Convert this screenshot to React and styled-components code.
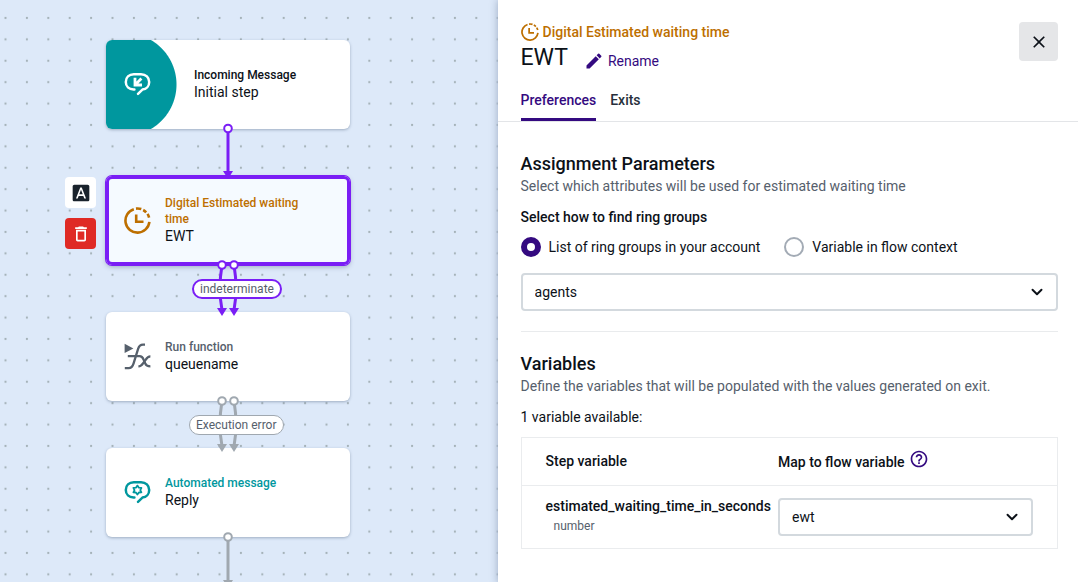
import React, { useState } from 'react';
import styled, { createGlobalStyle, css } from 'styled-components';
import { MdEdit, MdHelpOutline, MdDeleteOutline, MdFontDownload, MdClose } from 'react-icons/md';
import { ChevronDown } from 'lucide-react';

const GlobalStyle = createGlobalStyle`
  * {
    box-sizing: border-box;
  }
  body {
    margin: 0;
    background: #dde9f9;
    color: #0c1118;
    font-family: Roboto, 'Liberation Sans', sans-serif;
    font-size: 14px;
    line-height: 20px;
  }
  button, select {
    font: inherit;
    color: inherit;
    cursor: pointer;
  }
`;

const Layout = styled.div`
  display: grid;
  grid-template-columns: minmax(0, 6fr) minmax(0, 7fr);
  min-height: 100vh;
`;

/* Canvas */

const Canvas = styled.section`
  position: relative;
  overflow: hidden;
`;

const Drawing = styled.svg`
  position: absolute;
  top: 0;
  left: 0;
  width: 100%;
  height: 100%;
  pointer-events: none;
`;

const Node = styled.article`
  position: absolute;
  left: 106px;
  top: ${(p) => p.$top}px;
  width: 244px;
  height: 89px;
  display: flex;
  align-items: center;
  overflow: hidden;
  border-radius: 6px;
  background: #fff;
  box-shadow: 0 1px 3px rgba(40, 60, 90, 0.35);

  ${(p) =>
    p.$selected &&
    css`
      background: #f5faff;
      overflow: visible;
      box-shadow: 0 0 0 1px #7a1ef5, inset 0 0 0 3px #7a1ef5, 0 2px 5px rgba(40, 60, 90, 0.35);
    `}
`;

const NodeIcon = styled.div`
  display: flex;
  flex: none;
  width: 59px;
  padding-left: 18px;
  color: ${(p) => p.$color};
`;

const StartBadge = styled.div`
  display: flex;
  align-items: center;
  flex: none;
  width: 71px;
  height: 100%;
  margin-right: 17px;
  padding-left: 18px;
  color: #fff;
  background: radial-gradient(circle at 19px 50%, #00979e 51px, transparent 52px);
`;

const NodeText = styled.div`
  flex: 1;
  padding: 0 36px 2px 0;
`;

const NodeType = styled.div`
  font-size: 12px;
  font-weight: 500;
  line-height: 16px;
  color: ${(p) => p.$color};
`;

const NodeName = styled.div`
  font-size: 14px;
  line-height: 18px;
`;

const EdgeLabel = styled.div`
  position: absolute;
  left: ${(p) => p.$left}px;
  top: ${(p) => p.$top}px;
  padding: 0 6px;
  border: ${(p) => (p.$active ? '2px solid #7a1ef5' : '1px solid #a0a8b0')};
  border-radius: 10px;
  background: #fff;
  color: #56606c;
  font-size: 12px;
  line-height: ${(p) => (p.$active ? 16 : 18)}px;
`;

const NodeTools = styled.div`
  position: absolute;
  left: 65px;
  top: 177px;
  display: grid;
  gap: 10px;
`;

const ToolButton = styled.button`
  display: flex;
  align-items: center;
  justify-content: center;
  width: 31px;
  height: 31px;
  padding: 0;
  border: none;
  border-radius: 4px;
  background: ${(p) => (p.$danger ? '#df2a25' : '#fff')};
  color: ${(p) => (p.$danger ? '#fff' : '#19222c')};
`;

/* Side panel */

const Panel = styled.aside`
  position: relative;
  background: #fff;
  box-shadow: 0 0 8px rgba(30, 50, 90, 0.35);
`;

const PanelHeader = styled.header`
  display: flex;
  justify-content: space-between;
  align-items: flex-start;
  padding: 22px 20px 0 23px;
  border-bottom: 1px solid #e3e5e8;
`;

const StepType = styled.div`
  display: flex;
  align-items: center;
  gap: 4px;
  color: #bd6f00;
  font-weight: 500;
`;

const TitleRow = styled.div`
  display: flex;
  align-items: center;
  gap: 16px;
`;

const Title = styled.h1`
  margin: 0;
  font-size: 23px;
  font-weight: 400;
  line-height: 32px;
`;

const RenameButton = styled.button`
  display: flex;
  align-items: center;
  gap: 4px;
  padding: 5px 0 0;
  border: none;
  background: none;
  color: #340a80;
`;

const Tabs = styled.nav`
  display: flex;
  gap: 14px;
  margin-top: 16px;
`;

const Tab = styled.a`
  padding-bottom: 8px;
  border-bottom: 3px solid ${(p) => (p.$active ? '#340a80' : 'transparent')};
  color: ${(p) => (p.$active ? '#340a80' : '#27303b')};
  font-weight: 500;
  text-decoration: none;
`;

const CloseButton = styled.button`
  display: flex;
  align-items: center;
  justify-content: center;
  width: 39px;
  height: 39px;
  padding: 0;
  border: none;
  border-radius: 4px;
  background: #e5e6e8;
`;

const PanelBody = styled.div`
  padding: 30px 20px 34px 23px;
`;

const SectionTitle = styled.h2`
  margin: 0;
  font-size: 18px;
  font-weight: 500;
  line-height: 24px;
`;

const Hint = styled.p`
  margin: 0 0 11px;
  color: #56606c;
`;

const RadioGroup = styled.fieldset`
  display: flex;
  flex-wrap: wrap;
  gap: 10px 24px;
  margin: 0 0 16px;
  padding: 0;
  border: none;
`;

const Legend = styled.legend`
  margin-bottom: 10px;
  padding: 0;
  font-weight: 500;
`;

const RadioLabel = styled.label`
  display: flex;
  align-items: center;
  gap: 8px;
`;

const Radio = styled.input`
  appearance: none;
  width: 20px;
  height: 20px;
  margin: 0;
  border: 2px solid #a3abb5;
  border-radius: 50%;
  background: #fff;

  &:checked {
    border: 6px solid #340a80;
  }
`;

const SelectWrap = styled.div`
  display: grid;
  align-items: center;

  > * {
    grid-area: 1 / 1;
  }

  > svg {
    justify-self: end;
    margin-right: 12px;
    pointer-events: none;
  }
`;

const Select = styled.select`
  appearance: none;
  width: 100%;
  height: 38px;
  padding: 0 36px 0 12px;
  border: 2px solid #d3d9de;
  border-radius: 4px;
  background: #fff;
`;

const Divider = styled.hr`
  margin: 20px 0;
  border: 0;
  height: 1px;
  background: #e9ebed;
`;

const Table = styled.table`
  width: 100%;
  margin-top: 10px;
  border: 1px solid #eaecee;
  border-collapse: collapse;
  text-align: left;

  th {
    height: 48px;
    padding: 0;
    font-weight: 500;
  }

  th:first-child {
    width: 257px;
    padding: 0 6px 2px 24px;
  }

  td {
    padding: 12px 24px 12px 0;
  }

  tbody tr {
    border-top: 1px solid #eaecee;
  }
`;

const HeadWithHelp = styled.span`
  display: flex;
  gap: 4px;
  align-items: center;

  svg {
    margin-bottom: 5px;
    color: #340a80;
  }
`;

const VariableType = styled.div`
  padding-left: 8px;
  color: #56606c;
  font-size: 12px;
  font-weight: 400;
`;

const ClockIcon = ({ size }) => (
  <svg width={size} height={size} viewBox="0 0 27 27" fill="none" stroke="currentColor" strokeWidth="2.6">
    <path d="M9.8 2.2A12 12 0 1 0 25.4 14.9" />
    <path d="M12 1.6A12 12 0 0 1 17.3 2.1M19.2 3A12 12 0 0 1 22.2 5.3M23.5 6.9A12 12 0 0 1 25.1 10.6" />
    <path d="M12.2 7.5V14.8H19.5" />
  </svg>
);

const Bubble = ({ children }) => (
  <svg width="27" height="27" viewBox="0 0 27 27" fill="none" stroke="currentColor" strokeWidth="2.5">
    <path
      strokeLinecap="round"
      d="M10.4 18.6H9.6C5 18.4 1.8 15.4 1.8 11C1.8 6.4 5 3.2 9.8 3.2H17C21.8 3.2 25.2 6.4 25.2 11C25.2 15 22.4 18.2 18.4 18.6L14 22.8"
    />
    {children}
  </svg>
);

const IncomingIcon = () => (
  <Bubble>
    <path d="M11 6.8V14H18M11.5 13.5L17.4 7.6" strokeWidth="2.8" />
  </Bubble>
);

const AutomatedIcon = () => (
  <Bubble>
    <path
      strokeWidth="1.8"
      strokeLinejoin="round"
      d="M13.4 6.6L14.9 8.7L17.4 8.9L16.3 11.1L17.4 13.3L14.9 13.5L13.4 15.6L11.9 13.5L9.4 13.3L10.5 11.1L9.4 8.9L11.9 8.7Z"
    />
  </Bubble>
);

const FunctionIcon = () => (
  <svg width="27" height="27" viewBox="0 0 27 27" fill="none" stroke="currentColor" strokeWidth="2.3">
    <path d="M0.6 0.8L9.4 5.4L0.6 10Z" fill="currentColor" stroke="none" />
    <path d="M21 1.6H19C16 1.6 15 3 14.1 5.8L9.6 20.4C8.6 23.8 7.6 25.2 4.6 25.2H0.8" />
    <path d="M3.8 13.2H15.6C18 13.2 18.8 14.6 19.6 16.6L21.2 20.4C22 22.6 23 23.4 26.4 23.4" />
    <path d="M26.4 13.4C24 13.4 23 14.6 21.6 16.8L19.2 20.2C17.8 22.4 16.8 23.4 14.4 23.4" />
  </svg>
);

const Port = ({ x, y, color }) => <circle cx={x} cy={y} r="3.8" fill="#fff" stroke={color} strokeWidth="2" />;

const Arrow = ({ x, y, color }) => <path d={`M${x - 5} ${y - 7}H${x + 5}L${x} ${y + 1}Z`} fill={color} />;

const PURPLE = '#7a1ef5';
const GREY = '#a0a8b0';

// Two parallel exits between neighbouring steps
const DoubleEdge = ({ y, color }) => (
  <g>
    <path
      d={`M222 ${y}Q218 ${y + 24} 222 ${y + 45}M234 ${y}Q238 ${y + 24} 234 ${y + 45}`}
      fill="none"
      stroke={color}
      strokeWidth="3"
    />
    <Arrow x={222} y={y + 50} color={color} />
    <Arrow x={234} y={y + 50} color={color} />
    <Port x={222} y={y} color={color} />
    <Port x={234} y={y} color={color} />
  </g>
);

const SelectField = ({ options, ...rest }) => (
  <SelectWrap>
    <Select {...rest}>
      {options.map((o) => (
        <option key={o}>{o}</option>
      ))}
    </Select>
    <ChevronDown size={18} strokeWidth={2.6} />
  </SelectWrap>
);

const FlowCanvas = () => (
  <Canvas>
    <Drawing>
      <defs>
        <pattern id="dots" x="-5.2" y="7.3" width="21.4" height="21.4" patternUnits="userSpaceOnUse">
          <circle cx="10.7" cy="10.7" r="1.1" fill="#a3b0b6" />
        </pattern>
      </defs>
      <rect width="100%" height="100%" fill="url(#dots)" />
    </Drawing>

    <Node $top={40}>
      <StartBadge>
        <IncomingIcon />
      </StartBadge>
      <NodeText>
        <NodeType $color="#0c1118">Incoming Message</NodeType>
        <NodeName>Initial step</NodeName>
      </NodeText>
    </Node>

    <Node $top={176} $selected>
      <NodeIcon $color="#bd6f00">
        <ClockIcon size={27} />
      </NodeIcon>
      <NodeText>
        <NodeType $color="#bd6f00">Digital Estimated waiting time</NodeType>
        <NodeName>EWT</NodeName>
      </NodeText>
    </Node>

    <Node $top={312}>
      <NodeIcon $color="#56606c">
        <FunctionIcon />
      </NodeIcon>
      <NodeText>
        <NodeType $color="#56606c">Run function</NodeType>
        <NodeName>queuename</NodeName>
      </NodeText>
    </Node>

    <Node $top={448}>
      <NodeIcon $color="#00979e">
        <AutomatedIcon />
      </NodeIcon>
      <NodeText>
        <NodeType $color="#00979e">Automated message</NodeType>
        <NodeName>Reply</NodeName>
      </NodeText>
    </Node>

    <Drawing>
      <path d="M228 129V173" stroke={PURPLE} strokeWidth="3" />
      <Arrow x={228} y={178} color={PURPLE} />
      <Port x={228} y={128.5} color={PURPLE} />
      <DoubleEdge y={265} color={PURPLE} />
      <DoubleEdge y={401} color={GREY} />
      <path d="M228 537V582" stroke={GREY} strokeWidth="3" />
      <Arrow x={228} y={587} color={GREY} />
      <Port x={228} y={537} color={GREY} />
    </Drawing>

    <EdgeLabel $left={192} $top={279} $active>indeterminate</EdgeLabel>
    <EdgeLabel $left={189} $top={415}>Execution error</EdgeLabel>

    <NodeTools>
      <ToolButton aria-label="Annotate step">
        <MdFontDownload size={20} />
      </ToolButton>
      <ToolButton aria-label="Delete step" $danger>
        <MdDeleteOutline size={20} />
      </ToolButton>
    </NodeTools>
  </Canvas>
);

const App = () => {
  const [tab, setTab] = useState('Preferences');
  const [source, setSource] = useState('list');

  return (
    <>
      <GlobalStyle />
      <Layout>
        <FlowCanvas />

        <Panel>
          <PanelHeader>
            <div>
              <StepType>
                <ClockIcon size={18} />
                Digital Estimated waiting time
              </StepType>
              <TitleRow>
                <Title>EWT</Title>
                <RenameButton>
                  <MdEdit size={20} />
                  Rename
                </RenameButton>
              </TitleRow>
              <Tabs>
                {['Preferences', 'Exits'].map((name) => (
                  <Tab key={name} href={`#${name.toLowerCase()}`} $active={tab === name} onClick={() => setTab(name)}>
                    {name}
                  </Tab>
                ))}
              </Tabs>
            </div>
            <CloseButton aria-label="Close">
              <MdClose size={20} />
            </CloseButton>
          </PanelHeader>

          <PanelBody>
            <SectionTitle>Assignment Parameters</SectionTitle>
            <Hint>Select which attributes will be used for estimated waiting time</Hint>

            <RadioGroup>
              <Legend>Select how to find ring groups</Legend>
              <RadioLabel>
                <Radio type="radio" name="source" checked={source === 'list'} onChange={() => setSource('list')} />
                List of ring groups in your account
              </RadioLabel>
              <RadioLabel>
                <Radio type="radio" name="source" checked={source === 'variable'} onChange={() => setSource('variable')} />
                Variable in flow context
              </RadioLabel>
            </RadioGroup>
            <SelectField aria-label="Ring group" options={['agents']} />

            <Divider />

            <SectionTitle>Variables</SectionTitle>
            <Hint>Define the variables that will be populated with the values generated on exit.</Hint>
            <div>1 variable available:</div>

            <Table>
              <thead>
                <tr>
                  <th>Step variable</th>
                  <th>
                    <HeadWithHelp>
                      Map to flow variable
                      <MdHelpOutline size={20} />
                    </HeadWithHelp>
                  </th>
                </tr>
              </thead>
              <tbody>
                <tr>
                  <th scope="row">
                    estimated_waiting_time_in_seconds
                    <VariableType>number</VariableType>
                  </th>
                  <td>
                    <SelectField aria-label="Map to flow variable" options={['ewt']} />
                  </td>
                </tr>
              </tbody>
            </Table>
          </PanelBody>
        </Panel>
      </Layout>
    </>
  );
};

export default App;
